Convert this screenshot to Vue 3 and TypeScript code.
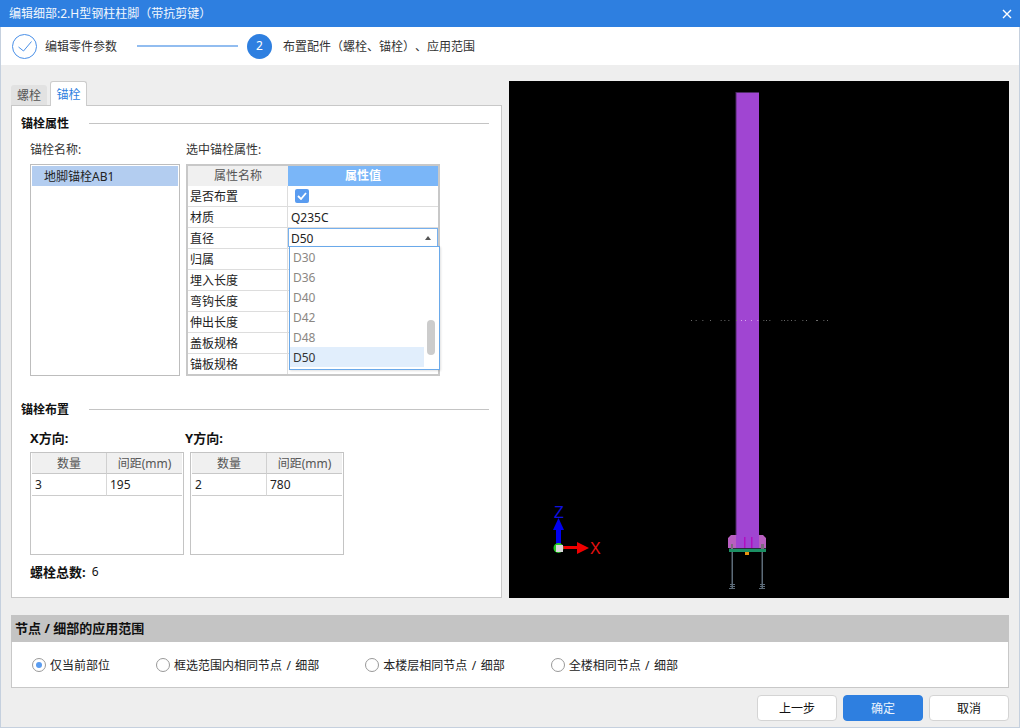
<script setup lang="ts">
import { ref } from 'vue'

interface BoltRow {
  name: string
  value: string
}

const rows: BoltRow[] = [
  { name: '材质', value: 'Q235C' },
  { name: '直径', value: 'D50' },
  { name: '归属', value: '' },
  { name: '埋入长度', value: '' },
  { name: '弯钩长度', value: '' },
  { name: '伸出长度', value: '' },
  { name: '盖板规格', value: '' },
  { name: '锚板规格', value: '' }
]
const options: string[] = ['D30', 'D36', 'D40', 'D42', 'D48', 'D50']
const scopes: string[] = ['仅当前部位', '框选范围内相同节点 / 细部', '本楼层相同节点 / 细部', '全楼相同节点 / 细部']
const grids = [
  { title: 'X方向:', count: 3, gap: 195 },
  { title: 'Y方向:', count: 2, gap: 780 }
]
const dots: number[] = [33, 47, 67, 90, 122, 133, 145, 168, 183, 195, 213, 232, 250, 258, 268, 304, 312, 322, 333, 344, 367, 378, 408, 411, 430, 441]

let scope = ref(0)
let diameter = ref('D50')
</script>

<template>
  <div class="window">
    <header class="title">
      <span>编辑细部:2.H型钢柱柱脚（带抗剪键）</span>
      <svg class="close" width="10" height="10" viewBox="0 0 10 10">
        <path d="M1 1 9 9M9 1 1 9" stroke="#fff" stroke-width="1.4" />
      </svg>
    </header>

    <div class="body">
      <div class="steps">
        <span class="step-done">
          <svg width="14" height="11" viewBox="0 0 14 11">
            <path d="M.5 6 5.5 10 13.5.5" fill="none" stroke="#4a90e8" />
          </svg>
        </span>
        <span class="step-text">编辑零件参数</span>
        <span class="step-line"></span>
        <span class="step-now"><span>2</span></span>
        <span class="step-text">布置配件（螺栓、锚栓）、应用范围</span>
      </div>

      <div class="main">
        <section class="left">
          <div class="tabs">
            <div class="tab">螺栓</div>
            <div class="tab active">锚栓</div>
          </div>
          <div class="panel">
            <div class="heading"><b>锚栓属性</b><i></i></div>
            <div class="attrs">
              <div>
                <div class="label">锚栓名称:</div>
                <div class="list"><div class="list-item">地脚锚栓AB1</div></div>
              </div>
              <div>
                <div class="label">选中锚栓属性:</div>
                <table class="prop">
                  <thead>
                    <tr>
                      <th class="col-name">属性名称</th>
                      <th class="col-value">属性值</th>
                    </tr>
                  </thead>
                  <tbody>
                    <tr>
                      <td>是否布置</td>
                      <td class="check-cell">
                        <span class="check">
                          <svg width="10" height="8" viewBox="0 0 10 8">
                            <path d="M1 4 4 7 9 1" fill="none" stroke="#fff" stroke-width="1.8" />
                          </svg>
                        </span>
                      </td>
                    </tr>
                    <tr v-for="row in rows" :key="row.name">
                      <td>{{ row.name }}</td>
                      <td v-if="row.name === '直径'" class="select-cell">
                        <div class="select">
                          <span class="select-text">{{ row.value }}</span>
                          <svg width="6" height="4" viewBox="0 0 6 4"><path d="M0 4 3 0 6 4Z" fill="#555" /></svg>
                          <div class="dropdown">
                            <div
                              v-for="o in options"
                              :key="o"
                              class="option"
                              :class="{ current: o === diameter }"
                            >
                              {{ o }}
                            </div>
                            <span class="thumb"></span>
                          </div>
                        </div>
                      </td>
                      <td v-else class="value">{{ row.value }}</td>
                    </tr>
                  </tbody>
                </table>
              </div>
            </div>

            <div class="heading second"><b>锚栓布置</b><i></i></div>
            <div class="layout">
              <div v-for="g in grids" :key="g.title">
                <div class="label strong">{{ g.title }}</div>
                <div class="grid-box">
                  <table class="grid">
                    <thead>
                      <tr>
                        <th class="g-count">数量</th>
                        <th>间距(mm)</th>
                      </tr>
                    </thead>
                    <tbody>
                      <tr>
                        <td>{{ g.count }}</td>
                        <td>{{ g.gap }}</td>
                      </tr>
                    </tbody>
                  </table>
                </div>
              </div>
            </div>
            <div class="total"><b>螺栓总数:</b><span>6</span></div>
          </div>
        </section>

        <div class="viewport">
          <svg width="500" height="517" viewBox="509 81 500 517">
            <rect x="736" y="92" width="23" height="450" fill="#a045d2" />
            <rect x="736" y="92" width="23" height="1" fill="#4d2a66" />
            <rect x="735.5" y="92" width="1" height="450" fill="#4d2a66" />
            <rect
              v-for="d in dots"
              :key="d"
              :x="680 + d / 3"
              y="320"
              width="1"
              height="1"
              :fill="d > 170 && d < 237 ? '#d9a8ee' : '#6a6a6a'"
            />
            <!-- column foot -->
            <path d="M736 535H731L728 538V548H766V538L763 535H759V542H736Z" fill="#b85fc0" />
            <rect x="736" y="535" width="23" height="13" fill="#a045d2" />
            <rect x="729" y="548" width="37" height="1" fill="#26303a" />
            <rect x="729" y="549" width="37" height="3" fill="#1b8f63" />
            <rect x="745" y="552" width="4" height="3" fill="#e8920f" />
            <rect x="744" y="537" width="1.5" height="11" fill="#b010c0" />
            <rect x="751" y="537" width="1.5" height="11" fill="#b010c0" />
            <rect x="731" y="544" width="2" height="5" fill="#7b6a80" />
            <rect x="761" y="544" width="3" height="5" fill="#7b6a80" />
            <g fill="#5c6b78">
              <rect x="731.5" y="552" width="1.5" height="37" />
              <rect x="761.5" y="552" width="1.5" height="37" />
              <rect x="730" y="584" width="5" height="1" />
              <rect x="730" y="586" width="5" height="1" />
              <rect x="729" y="588" width="6" height="1" />
              <rect x="760" y="584" width="5" height="1" />
              <rect x="760" y="586" width="5" height="1" />
              <rect x="759" y="588" width="6" height="1" />
            </g>
            <!-- axes -->
            <rect x="556" y="530" width="5" height="14" fill="#0000f0" />
            <path d="M558.5 518 564 530H553Z" fill="#0000f0" />
            <rect x="563" y="546" width="15" height="3" fill="#f00000" />
            <path d="M589 548 577 542V554Z" fill="#f00000" />
            <circle cx="558.5" cy="548" r="5" fill="#22cc22" />
            <rect x="556" y="545" width="7" height="7" fill="#d8d8d8" />
            <text x="554" y="518" class="axis" fill="#1010e0">Z</text>
            <text x="590" y="554" class="axis" fill="#e81010">X</text>
          </svg>
        </div>
      </div>

      <section class="scope">
        <div class="scope-head">节点 / 细部的应用范围</div>
        <div class="scope-body">
          <label v-for="(s, i) in scopes" :key="s" class="radio-item">
            <span class="radio" :class="{ on: scope === i }"></span>
            <span class="radio-text">{{ s }}</span>
          </label>
        </div>
      </section>

      <footer class="footer">
        <button class="btn">上一步</button>
        <button class="btn primary">确定</button>
        <button class="btn">取消</button>
      </footer>
    </div>
  </div>
</template>

<style>
html,
body {
  margin: 0;
  background: #eee;
}
</style>

<style scoped>
.window {
  width: 1020px;
  height: 728px;
  font-family: 'Noto Sans', 'Noto Sans CJK SC', sans-serif;
  font-size: 12px;
  line-height: 18px;
  color: #222;
  background: #eee;
  overflow: hidden;
  text-spacing-trim: space-all;
}

.title {
  display: flex;
  align-items: center;
  justify-content: space-between;
  height: 27px;
  padding: 0 9px;
  color: #f2f7fd;
  background: #2e7fe0;
}
.close {
  margin-right: -1px;
}

.body {
  height: 701px;
  box-sizing: border-box;
  padding: 0 10px;
  border: 1px solid #c5d0de;
  border-top: none;
}

.steps {
  display: flex;
  align-items: center;
  height: 38px;
  margin: 0 -10px;
  padding-left: 11px;
  background: #fff;
}
.step-done,
.step-now {
  display: flex;
  align-items: center;
  justify-content: center;
  box-sizing: border-box;
  width: 25px;
  height: 25px;
  border-radius: 50%;
}
.step-done {
  border: 1px solid #4a90e8;
}
.step-now {
  color: #fff;
  background: #2e7fe0;
}
.step-text {
  margin-left: 8px;
  padding-top: 2px;
  color: #333;
}
.step-now + .step-text {
  margin-left: 11px;
}
.step-line {
  width: 101px;
  height: 2px;
  margin: 0 9px 0 20px;
  background: #92bdf0;
}

.main {
  display: grid;
  grid-template-columns: 491px 500px;
  column-gap: 7px;
  height: 517px;
  margin-top: 16px;
}

.tabs {
  display: flex;
  align-items: flex-end;
  gap: 3px;
  height: 24px;
}
.tab {
  box-sizing: border-box;
  width: 36px;
  height: 20px;
  color: #555;
  line-height: 21px;
  text-align: center;
  background: #e2e2e2;
  border-radius: 3px 3px 0 0;
}
.tab.active {
  position: relative;
  width: 37px;
  height: 25px;
  margin-bottom: -1px;
  color: #2e7fe0;
  line-height: 26px;
  background: #fff;
  border: 1px solid #ccc;
  border-bottom: none;
}

.panel {
  box-sizing: border-box;
  height: 493px;
  padding: 8px 12px 0 9px;
  background: #fff;
  border: 1px solid #c8c8c8;
}

.heading {
  display: flex;
  align-items: center;
  height: 18px;
  color: #111;
}
.heading b {
  padding-top: 2px;
}
.heading i {
  flex: 1;
  height: 1px;
  margin-left: 20px;
  background: #c4c4c4;
}
.heading.second {
  margin-top: 24px;
}

.attrs {
  display: grid;
  grid-template-columns: 150px 254px;
  column-gap: 6px;
  margin: 8px 0 0 9px;
}
.label {
  height: 18px;
  margin-bottom: 6px;
  color: #333;
  line-height: 20px;
}
.list {
  box-sizing: border-box;
  height: 212px;
  padding: 1px;
  border: 1px solid #bdbdbd;
}
.list-item {
  height: 20px;
  padding-left: 12px;
  line-height: 21px;
  background: #b3cdf0;
}

table {
  width: 100%;
  table-layout: fixed;
  border-collapse: separate;
  border-spacing: 0;
}

.prop {
  box-sizing: border-box;
  width: 254px;
  border: 2px solid #c8c8c8;
}
.prop th {
  box-sizing: border-box;
  height: 20px;
  padding: 0;
  font-weight: 400;
}
.col-name {
  width: 100px;
  color: #555;
  background: #f0f0f0;
}
.col-value {
  color: #fff;
  font-weight: 700 !important;
  background: #7ab6f8;
}
.prop td {
  box-sizing: border-box;
  height: 21px;
  padding: 2px 0 0 2px;
  border-bottom: 1px solid #ddd;
}
.prop td:first-child {
  border-right: 1px solid #ddd;
}
.prop tr:last-child td {
  height: 20px;
  border-bottom: none;
}
.prop td.check-cell {
  padding: 0 0 0 7px;
}
.check {
  display: flex;
  align-items: center;
  justify-content: center;
  width: 14px;
  height: 14px;
  background: #5a9cf0;
  border-radius: 2px;
}
.prop td.value {
  padding-left: 3px;
}
.prop td.select-cell {
  position: relative;
  padding: 0;
  vertical-align: top;
}
.select {
  position: relative;
  display: flex;
  align-items: center;
  justify-content: space-between;
  box-sizing: border-box;
  width: 150px;
  height: 19px;
  padding: 0 6px 0 2px;
  border: 1px solid #76b0ee;
}
.select-text {
  padding-top: 2px;
}
.dropdown {
  position: absolute;
  top: 17px;
  left: 0;
  z-index: 2;
  box-sizing: border-box;
  width: 151px;
  height: 124px;
  background: #fff;
  border: 1px solid #6aa9ea;
  box-shadow: 1px 1px 2px rgba(0, 0, 0, 0.12);
}
.option {
  width: 134px;
  height: 20px;
  padding-left: 3px;
  box-sizing: border-box;
  color: #8b8783;
  line-height: 22px;
}
.option.current {
  color: #333;
  background: #e1eefc;
}
.thumb {
  position: absolute;
  top: 73px;
  left: 137px;
  width: 8px;
  height: 35px;
  background: #ccc;
  border-radius: 4px;
}

.layout {
  display: grid;
  grid-template-columns: 154px 154px;
  column-gap: 6px;
  margin: 10px 0 0 9px;
}
.label.strong {
  color: #111;
  font-size: 13px;
  font-weight: 700;
}
.layout > div + div .label {
  margin-left: -5px;
}
.grid-box {
  box-sizing: border-box;
  height: 103px;
  padding: 0 1px;
  border: 1px solid #c4c4c4;
}
.grid th {
  box-sizing: border-box;
  height: 21px;
  padding: 2px 0 0;
  color: #555;
  font-weight: 400;
  background: #f0f0f0;
  border-bottom: 1px solid #c8c8c8;
}
.g-count {
  width: 75px;
  border-right: 1px solid #d0d0d0;
}
.grid td {
  box-sizing: border-box;
  height: 22px;
  padding: 0 0 0 3px;
  border-bottom: 1px solid #ccc;
}
.grid td:first-child {
  border-right: 1px solid #d8d8d8;
}

.total {
  display: flex;
  gap: 6px;
  margin: 8px 0 0 9px;
  color: #111;
}
.total b {
  font-size: 13px;
}

.viewport {
  background: #000;
}
.viewport svg {
  display: block;
}
.axis {
  font-family: 'Liberation Sans', sans-serif;
  font-size: 16px;
}

.scope {
  box-sizing: border-box;
  height: 73px;
  margin-top: 17px;
  background: #fff;
  border: 1px solid #c8c8c8;
  border-top: none;
}
.scope-head {
  height: 27px;
  margin: 0 -1px;
  padding-left: 4px;
  color: #111;
  font-size: 13px;
  font-weight: 700;
  line-height: 27px;
  background: #c4c4c4;
}
.scope-body {
  display: flex;
  align-items: center;
  gap: 46px;
  height: 45px;
  padding-left: 20px;
  word-spacing: 1.3px;
}
.radio-item {
  display: flex;
  align-items: center;
  gap: 4px;
}
.radio-text {
  padding-top: 2px;
}
.radio {
  display: flex;
  align-items: center;
  justify-content: center;
  box-sizing: border-box;
  width: 14px;
  height: 14px;
  background: #fff;
  border: 1px solid #999;
  border-radius: 50%;
}
.radio.on::after {
  width: 6px;
  height: 6px;
  content: '';
  background: #5a9cf0;
  border-radius: 50%;
}

.footer {
  display: flex;
  justify-content: flex-end;
  gap: 6px;
  margin-top: 7px;
}
.btn {
  width: 80px;
  height: 26px;
  padding: 2px 0 0;
  color: #111;
  font: inherit;
  background: #fff;
  border: 1px solid #d4d4d4;
  border-radius: 4px;
}
.btn.primary {
  color: #eaf3fd;
  background: #2e7fe0;
  border-color: #2e7fe0;
}
</style>
